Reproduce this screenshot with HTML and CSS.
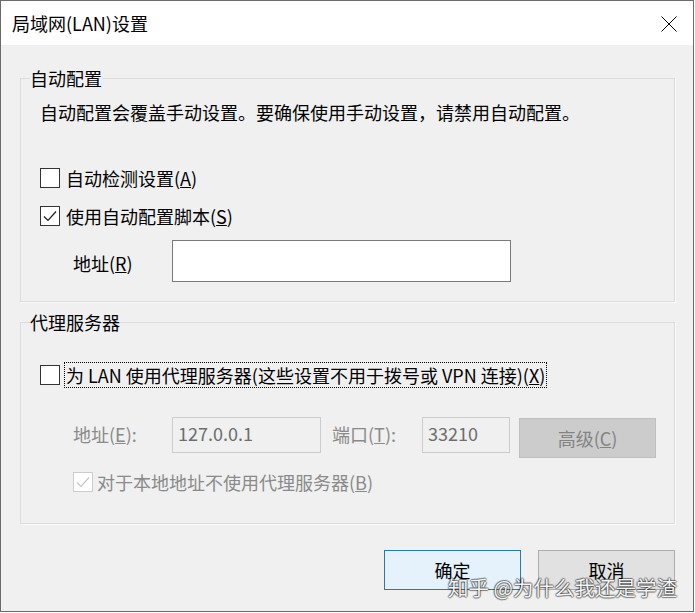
FILE: index.html
```html
<!DOCTYPE html>
<html>
<head>
    <meta charset="utf-8">
    <title>局域网(LAN)设置</title>
    <link rel="stylesheet" href="styles.css">
</head>
<body>
    <div class="window">
        <div class="titlebar">
            <span class="title">局域网(LAN)设置</span>
            <svg class="close" width="16" height="16" viewBox="0 0 16 16">
                <path d="M0.5 0.5 L15.5 15.5 M15.5 0.5 L0.5 15.5" stroke="#000" stroke-width="1" fill="none"/>
            </svg>
        </div>

        <div class="content">
            <fieldset class="group group-auto">
                <legend>自动配置</legend>
                <div class="inner">
                    <p class="note">自动配置会覆盖手动设置。要确保使用手动设置，请禁用自动配置。</p>

                    <div class="check check-detect">
                        <span class="box"></span>
                        <span class="check-label">自动检测设置(<u>A</u>)</span>
                    </div>

                    <div class="check check-script">
                        <span class="box">
                            <svg width="18" height="18" viewBox="0 0 18 18">
                                <polyline points="3,9.5 7,13.5 15,4.5" stroke="#1a1a1a" stroke-width="1.2" fill="none"/>
                            </svg>
                        </span>
                        <span class="check-label">使用自动配置脚本(<u>S</u>)</span>
                    </div>

                    <div class="field-row">
                        <span class="field-label">地址(<u>R</u>)</span>
                        <span class="textbox textbox-script"></span>
                    </div>
                </div>
            </fieldset>

            <fieldset class="group group-proxy">
                <legend>代理服务器</legend>
                <div class="inner">
                    <div class="check check-proxy">
                        <span class="box"></span>
                        <span class="check-label focused">为 LAN 使用代理服务器(这些设置不用于拨号或 VPN 连接)(<u>X</u>)</span>
                    </div>

                    <div class="proxy-row">
                        <span class="field-label disabled">地址(<u>E</u>):</span>
                        <span class="textbox textbox-addr disabled">127.0.0.1</span>
                        <span class="field-label port-label disabled">端口(<u>T</u>):</span>
                        <span class="textbox textbox-port disabled">33210</span>
                        <button class="btn btn-advanced" disabled>高级(<u>C</u>)</button>
                    </div>

                    <div class="check check-bypass disabled">
                        <span class="box">
                            <svg width="18" height="18" viewBox="0 0 18 18">
                                <polyline points="3,9.5 7,13.5 15,4.5" stroke="#c4c4c4" stroke-width="1.2" fill="none"/>
                            </svg>
                        </span>
                        <span class="check-label">对于本地地址不使用代理服务器(<u>B</u>)</span>
                    </div>
                </div>
            </fieldset>

            <div class="actions">
                <button class="btn btn-ok">确定</button>
                <button class="btn btn-cancel">取消</button>
            </div>
        </div>

        <div class="watermark">知乎 @为什么我还是学渣</div>
    </div>
</body>
</html>
```

FILE: styles.css
```css
body {
    margin: 0;
    padding: 0;
    background-color: #fff;
    font-family: "Noto Sans CJK SC", "Microsoft YaHei", sans-serif;
    font-size: 18px;
    line-height: 24px;
    color: #000;
}

.window {
    position: relative;
    width: 694px;
    height: 612px;
    box-sizing: border-box;
    border: 1px solid #6b6b6b;
    background-color: #f0f0f0;
}

.titlebar {
    height: 44px;
    display: flex;
    align-items: center;
    padding-left: 11px;
    background-color: #fff;
}

.close {
    margin-left: auto;
    margin-right: 16px;
    margin-top: 1px;
}

.content {
    padding: 21px 18px 0 19px;
}

/* group boxes */
.group {
    margin: 0;
    padding: 0 0 0 9px;
    min-width: 0;
    border: 1px solid #dcdcdc;
    box-shadow: 1px 1px 0 #fafafa;
}

.group legend {
    padding: 0;
    line-height: 24px;
}

.group-auto .inner {
    padding: 10px 0 19px 10px;
}

.group-proxy {
    margin-top: 8px;
}

.group-proxy .inner {
    padding: 28px 0 29px 10px;
}

.note {
    margin: 0;
}

/* checkboxes */
.check {
    display: flex;
    align-items: center;
}

.box {
    width: 20px;
    height: 20px;
    box-sizing: border-box;
    border: 1px solid #333;
    background-color: #fff;
    display: flex;
    align-items: center;
    justify-content: center;
    flex-shrink: 0;
}

.check-label {
    margin-left: 6px;
}

.check-detect {
    margin-top: 42px;
}

.check-script {
    margin-top: 14px;
}

.check-proxy .check-label {
    margin-left: 4px;
    padding: 0 1px;
    border: 1px dotted #000;
}

.check-bypass {
    margin-top: 12px;
    margin-left: 33px;
}

.check-bypass .check-label {
    margin-left: 4px;
}

.check.disabled .box {
    border-color: #cccccc;
}

.disabled {
    color: #8a8a8a;
}

/* text fields */
.field-row {
    display: flex;
    align-items: center;
    margin-top: 12px;
    margin-left: 33px;
}

.field-row .field-label {
    width: 99px;
    padding-top: 3px;
}

.textbox {
    display: block;
    box-sizing: border-box;
    background-color: #fff;
    border: 1px solid #7a7a7a;
}

.textbox-script {
    width: 339px;
    height: 42px;
}

.proxy-row {
    display: flex;
    align-items: flex-start;
    margin-top: 29px;
    margin-left: 33px;
}

.proxy-row .field-label {
    width: 99px;
    line-height: 34px;
}

.proxy-row .port-label {
    width: 90px;
    margin-left: 11px;
}

.textbox.disabled {
    height: 36px;
    padding: 0 5px;
    line-height: 31px;
    background-color: #f0f0f0;
    border-color: #cccccc;
    color: #6d6d6d;
}

.textbox-addr {
    width: 149px;
}

.textbox-port {
    width: 88px;
}

/* buttons */
.btn {
    box-sizing: border-box;
    width: 137px;
    height: 40px;
    padding: 0;
    font-family: inherit;
    font-size: 18px;
    line-height: 24px;
    color: #000;
    background-color: #e1e1e1;
    border: 1px solid #adadad;
    border-radius: 0;
}

.btn-advanced {
    margin-left: 9px;
    margin-top: 1px;
    background-color: #cccccc;
    border-color: #bfbfbf;
    color: #838383;
}

.actions {
    display: flex;
    justify-content: flex-end;
    gap: 17px;
    margin-top: 26px;
}

.btn-ok {
    background-color: #e5f1fb;
    border-color: #2a79b4;
}

/* site watermark over the dialog */
.watermark {
    position: absolute;
    left: 447px;
    top: 574px;
    font-size: 20.5px;
    line-height: 24px;
    color: #f4f4f4;
    text-shadow: 1px 0 1px rgba(0, 0, 0, 0.45), -1px 0 1px rgba(0, 0, 0, 0.45),
        0 1px 1px rgba(0, 0, 0, 0.45), 0 -1px 1px rgba(0, 0, 0, 0.45);
    white-space: nowrap;
}
```
